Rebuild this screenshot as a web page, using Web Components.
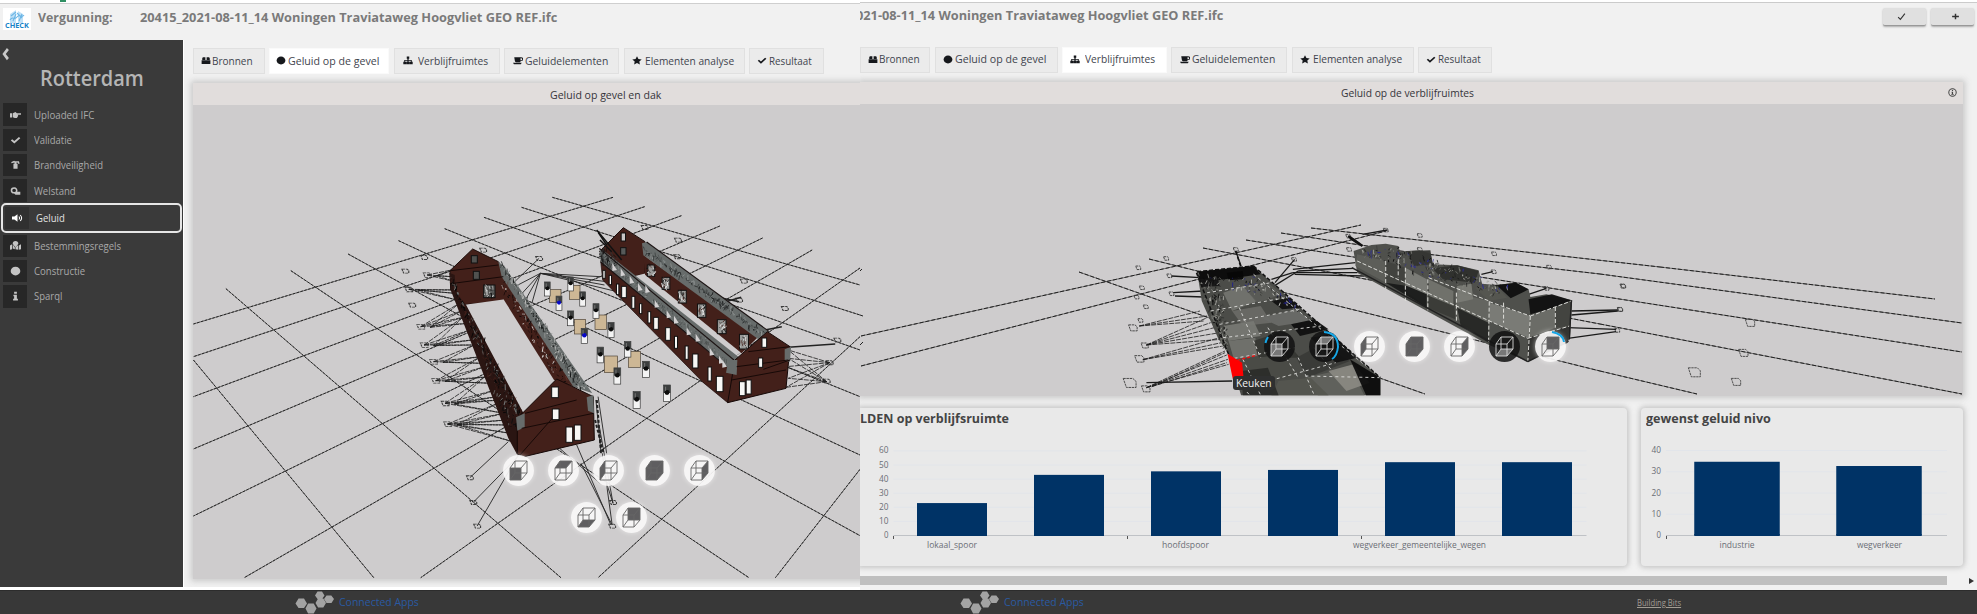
<!DOCTYPE html>
<html lang="nl">
<head>
<meta charset="utf-8">
<title>Vergunning</title>
<style>
html,body{margin:0;padding:0;background:#f1f1f1;overflow:hidden}
body{width:1977px;height:614px;font-family:"Open Sans","Noto Sans",sans-serif}
</style>
</head>
<body>
<permit-page></permit-page>
<script>
const define=(name,html,extra={})=>{
  const C=class extends HTMLElement{
    connectedCallback(){
      if(this.shadowRoot)return;
      this.attachShadow({mode:"open"}).innerHTML=typeof html==="function"?html(this):html;
      if(extra.ready)extra.ready(this);
    }
  };
  customElements.define(name,C);
};
const at=(e,n,d="")=>e.hasAttribute(n)?e.getAttribute(n):d;

/* one line of text scaled to a set width */
define("fit-text",`<style>:host{display:inline-block;white-space:nowrap;flex:none}span{display:inline-block;transform-origin:0 50%;text-decoration:var(--line,none)}</style><span><slot></slot></span>`,{ready(e){
  const w=+at(e,"w",100),s=e.shadowRoot.querySelector("span");
  e.style.width=w+"px";
  s.style.transform=`scaleX(${w/s.offsetWidth})`;
}});

/* icons, 16x16 grid */
const ICONS={
  bin:'<path d="M2 7V4l1-2h4v5zM9 7V2h4l1 2v3zM1 7.500h14V14H1z"/>',
  disc:'<circle cx="8" cy="8" r="7"/>',
  tree:'<path d="M6 1h4v4H9v2h5v3h1.500v4.500h-5V10h2V8.600H9V10h1.300v4.500H5.700V10H7V8.600H3.500V10h2v4.500h-5V10H2V7h5V5H6z"/>',
  cup:'<path d="M2 2h11a3 3 0 0 1 0 7h-1v1a2 2 0 0 1-2 1H5a2 2 0 0 1-2-2zM12 4v3.500h1A1.700 1.700 0 0 0 13 4zM0 12h14l-1.500 2.500H1.500z" fill-rule="evenodd"/>',
  star:'<path d="M8 .5l2.300 4.900 5.200.7-3.800 3.700.9 5.400L8 12.600l-4.600 2.600.9-5.400L.5 6.100l5.200-.7z"/>',
  check:'<path d="M1.200 8.600l2-2L6.300 9.700 13 3l2 2-8.700 8.600z"/>',
  thin:'<path d="M2 9l4 4 8-10" fill="none" stroke="currentColor" stroke-width="2"/>',
  plus:'<path d="M6.700 3h2.600v3.700H14v2.600H9.300V13H6.700V9.300H2V6.700h4.700z"/>',
  hand:'<path d="M0 5h3v7H0zM4 5l4-2 2 2h5a1.200 1.200 0 0 1 0 2.600h-4l1 1-.5 1.500-.7 1.500-1 1.200H7L4 11.500z"/>',
  crane:'<path d="M2 3l4-2 1 1h6l1 4h-2l-1-2H9.500v2H11v8H5V6h1.500V4L2 5z"/>',
  search:'<path d="M6 2a5 5 0 0 1 4.500 7H15v5H8l-2-2a5 5 0 1 1 0-10zm0 2.300a2.700 2.700 0 1 0 0 5.400 2.700 2.700 0 0 0 0-5.400z" fill-rule="evenodd"/>',
  sound:'<path d="M0 5.500h3.500L8 2v12L3.500 10.500H0z"/><path d="M10 5.500q2 2.500 0 5M12 3.200q4 4.800 0 9.600" fill="none" stroke="currentColor" stroke-width="1.500"/>',
  map:'<path d="M0 7l3-2v8l-3 1zM4 5l1 2 2 3v3l-3-1zM12 7v7l-4-1v-3l3-3zM13 7l3-2v8l-3 1z"/><path d="M8 0a4 4 0 0 1 4 4q0 2-4 6-4-4-4-6a4 4 0 0 1 4-4z"/>',
  info:'<path d="M6 1h4v3.200H6zM5 6h5v6.500h1.500V15h-7v-2.500H6V8.200H5z"/>',
  back:'<path d="M10.500 1L14 3.500 8.500 8l5.500 4.500L10.500 15 2.500 8z"/>',
  circled:'<circle cx="8" cy="8" r="6.600" fill="none" stroke="currentColor" stroke-width="1.800"/><path d="M7 3.500h2v2H7zM6.300 6.500h2.700v4h1.300v1.700H5.800v-1.700h1V8h-.5z"/>'
};
define("ui-icon",e=>`<style>:host{display:inline-flex;flex:none;width:${at(e,"w",at(e,"s",10))}px;height:${at(e,"s",10)}px}svg{width:100%;height:100%;fill:currentColor}</style><svg viewBox="0 0 16 16" preserveAspectRatio="none">${ICONS[at(e,"name")]}</svg>`);

define("tab-item",e=>`<style>
:host{display:flex;box-sizing:border-box;width:${at(e,"w")}px;height:26px;flex:none;align-items:center;justify-content:center;gap:${at(e,"gap",2)}px;padding:0 3px 1px 0;background:#ebebeb;border:1px solid #e0e0e0;color:#16181c;font-size:10.500px;overflow:hidden}
:host([active]){background:#fff;border-color:#fafafa}fit-text{color:#3f454e}</style>
<ui-icon name="${at(e,"icon")}" s="9" w="10"></ui-icon><fit-text w="${at(e,"tw")}">${at(e,"label")}</fit-text>`);

define("menu-item",e=>`<style>
:host{display:flex;box-sizing:border-box;align-items:center;height:25.300px;padding-left:3px;color:#a9a9a9;font-size:10.500px}
b{display:flex;align-items:center;justify-content:center;width:24px;height:22.500px;background:#272727;color:#c4c4c4}
fit-text{margin-left:7px}
:host([active]){height:30px;margin:0 1px;border:2px solid #e6e6e6;border-radius:5px;color:#e2e2e2;padding-left:2px}
:host([active]) b{background:#303030;color:#fff}</style>
<b><ui-icon name="${at(e,"icon")}" s="10" w="11"></ui-icon></b><fit-text w="${at(e,"w")}">${at(e,"label")}</fit-text>`);

define("side-menu",`<style>
:host{display:block;box-sizing:border-box;width:184px;height:547px;background:#3a3a3a;flex:none;border-right:1px solid #fff}
.b{height:18px;padding:4px 0 0 1px;color:#c8c8c8;box-sizing:border-box}
.t{height:38px;padding-left:39.500px;display:flex;align-items:center;color:#b5b5b5;font-size:21.500px;font-weight:600}</style>
<div class="b"><ui-icon name="back" s="14" w="9"></ui-icon></div>
<div class="t"><fit-text w="104">Rotterdam</fit-text></div><div style="height:6px"></div>
<menu-item icon="hand" label="Uploaded IFC" w="60"></menu-item>
<menu-item icon="check" label="Validatie" w="38"></menu-item>
<menu-item icon="crane" label="Brandveiligheid" w="69"></menu-item>
<menu-item icon="search" label="Welstand" w="42"></menu-item>
<menu-item icon="sound" label="Geluid" w="29" active></menu-item>
<menu-item icon="map" label="Bestemmingsregels" w="87"></menu-item>
<menu-item icon="disc" label="Constructie" w="51"></menu-item>
<menu-item icon="info" label="Sparql" w="28"></menu-item>`);

define("check-logo",`<style>:host{display:flex;flex-direction:column;align-items:center;width:28px;height:22px;background:#fff;color:#1683c8;font-size:7px;line-height:6px;font-weight:700}svg{width:16px;height:14px;margin-top:1px}</style>
<svg viewBox="0 0 16 14"><path d="M1 14V5l6-4v13zM9 14V2l5 3v9z" fill="#bfe0f6"/><path d="M1 11c3-5 4 1 7-3s4 2 7-2M2 7l5-4M8 4l5 5M4 12l3-7M10 12l3-7" fill="none" stroke="#6cb6e6" stroke-width="1.100"/></svg><fit-text w="24">CHECK</fit-text>`);

define("app-footer",e=>`<style>
:host{display:flex;align-items:center;height:24px;background:#383838;flex:none;box-sizing:border-box;border-top:1px solid #2c2c2c;font-size:11px;color:#2a5aa2}
svg{width:40px;height:24px;margin-left:${at(e,"x")}px;fill:#a3a3a3;flex:none}fit-text{margin-left:4px;margin-top:-2px}
.b{margin-left:553px;color:#a39d94;font-size:8.500px;--line:underline;margin-top:0}</style>
<svg viewBox="0 0 40 24"><path d="M.500 12.500l3-5h5.500l3 5-3 4.500H3.500zM10.500 17.500l2.600-5h5.600l2.800 5-2.800 5h-5.600zM20.500 12l2.600-4.500h5.200l2.700 4.500-2.700 4.500h-5.200zM20 4.500l2.500-4h4.500l2.500 4-2.500 3.500h-4.500zM29 8l2.500-3.600h4.800L39 8l-2.500 4h-5z"/></svg>
<fit-text w="80">Connected Apps</fit-text>${e.hasAttribute("partner")?'<fit-text class="b" w="44">Building Bits</fit-text>':""}`);

/* viewpoint button: a wire cube with one shaded side */
const FACES={front:"M7 13h11v12H7z",top:"M7 13l5-7h12l-6 7z",left:"M7 13l5-7v12l-5 7z",solid:"M7 13l5-7h12v12l-6 7H7z",right:"M18 13l6-7v12l-6 7z",bottom:"M7 25l5-7h12l-6 7z",rear:"M12 6h12v12H12z"};
define("view-cube",e=>{const k=e.hasAttribute("dark"),c=k?"#d8d8d8":"#666";return `<style>:host{display:block;width:31px;height:31px;border-radius:50%;background:${k?"rgba(18,18,18,.86)":"rgba(249,248,248,.93)"};box-shadow:0 0 5px ${k?"transparent":"rgba(255,255,255,.55)"}}svg{display:block}</style>
<svg width="31" height="31" viewBox="0 0 31 31">${e.hasAttribute("arc")?`<path d="${at(e,"arc")}" fill="none" stroke="#16a7e8" stroke-width="2"/>`:""}<path d="${FACES[at(e,"face")]}" fill="${k?"#777":"#5f5e60"}"/><path d="M7 13h11v12H7zM12 6h12v12H12zM7 13l5-7M18 13l6-7M7 25l5-7M18 25l6-7" fill="none" stroke="${c}" stroke-width=".9"/></svg>`});

/* scene helpers */
let seed=7;const rnd=()=>((seed=(seed*16807)%2147483647)/2147483647);
const P=(pts,f,x="")=>`<polygon points="${pts}" fill="${f}" ${x}/>`;
const L=(a,s="#222",w=1,x="")=>a.map(l=>`<path d="M${l[0]} ${l[1]}L${l[2]} ${l[3]}" stroke="${s}" stroke-width="${w}" fill="none" vector-effect="non-scaling-stroke" ${x}/>`).join("");
const mix=(a,b,t)=>[a[0]+(b[0]-a[0])*t,a[1]+(b[1]-a[1])*t];
/* short strokes scattered over the quad a-b (one edge) and c-d (opposite edge) */
const speck=(a,b,c,d,n,cols,len=14)=>{let o="";for(let i=0;i<n;i++){const t=rnd(),p=mix(mix(a,b,t),mix(c,d,t),rnd()),q=rnd()*6.28,l=len*(.3+rnd());o+=`<path d="M${p[0].toFixed(1)} ${p[1].toFixed(1)}l${(Math.cos(q)*l*.5).toFixed(1)} ${(Math.sin(q)*l).toFixed(1)}" stroke="${cols[i%cols.length]}" stroke-width="${(1.200+rnd()*2).toFixed(1)}"/>`}return o};
const fan=(x,y,ts)=>L(ts.map(t=>[x,y,t[0],t[1]]),"#1c1c1c",.8,'stroke-dasharray="5 1"');
const node=(x,y,r=8)=>`<path d="M${x-r} ${y-r*.7}h${r*1.500}l${r*.5} ${r*.5}v${r}h${-r*1.500}z" fill="none" stroke="#3c3c3c" stroke-width="2.600" stroke-dasharray="7 2"/>`;
const crack=(x,y,w,h,f="#f7f7f5")=>`<rect x="${x-w/2}" y="${y-h/2}" width="${w}" height="${h}" fill="${f}" stroke="#111" stroke-width="3"/>`;

function sceneFacade(){
  const g1=[[848,292,1568,555],[776,322,1568,645],[688,352,1568,750],[596,386,1568,890],[488,422,1568,1065],[370,462,1568,1307],[236,512,1308,1433],[84,566,868,1433],[8,780,430,1433],[990,292,8,672],[1064,320,8,770],[1150,347,8,890],[1240,378,8,1047],[1340,414,8,1248],[1456,450,127,1433],[1568,504,540,1433],[1568,710,955,1433],[1568,1108,1370,1433]];
  let o=`<g transform="translate(190,100) scale(.42730,.33333)">${L(g1,"#2b2b2b",.6)}${L(g1,"#222",.95,'stroke-dasharray="2.500 1.500"')}`;
  [[555,525,[[612,510],[612,530],[620,545]]],[512,568,[[620,580],[625,600],[630,570]]],[540,680,[[630,610],[640,630],[645,650],[650,670]]],[548,735,[[640,650],[655,690],[665,735],[660,720]]],[570,785,[[665,735],[680,770],[685,790]]],[575,842,[[680,770],[690,800],[700,830],[705,850]]],[597,910,[[690,830],[715,870],[725,900],[735,940],[720,890]]],[603,972,[[720,910],[735,940],[750,1000],[755,1025],[745,975],[740,960]]]]
    .forEach(f=>{o+=fan(f[0],f[1],f[2]);o+=fan(f[0]+22,f[1]+2,f[2]);o+=node(f[0],f[1],9)});
  o+=L([[655,1133,745,1025],[663,1207,790,1040],[672,1278,775,1050],[820,520,770,590],[820,520,785,600],[820,520,760,560],[820,520,800,610],[817,475,760,545],[820,520,960,530],[820,520,975,545],[820,520,1000,575],[820,520,970,555],[955,890,975,1060],[950,900,962,1060],[958,980,990,1210],[905,1035,985,1275],[865,1045,960,1150],[975,1150,990,1210],[915,1090,988,1275],[965,1060,988,1275]],"#222",.9);
  o+=L([[952,900,962,1060],[948,960,968,1060]],"#222",2,'stroke-dasharray="3 2"');
  [[655,1133],[663,1207],[672,1278],[990,1207],[988,1278],[817,475],[548,472],[504,513],[520,615],[686,450],[1064,382],[1142,420],[1140,470],[1296,543],[1392,625],[1515,720],[1497,788],[1490,843],[1285,600]].forEach(n=>o+=node(n[0],n[1],8));
  [[1497,788],[1490,845]].forEach(n=>o+=fan(n[0],n[1],[[1400,750],[1400,775],[1395,800],[1400,835],[1395,862]]));
  o+=L([[1400,742,1510,732],[1345,690,1385,680],[1230,590,1285,605],[1235,612,1290,592]],"#222",1.500);
  o+="</g><g transform=\"translate(430,180) scale(.33333)\">";
  const B="#43201a",D="#2a1512",G="#676c6b",F="#cecccd";
  // left block
  o+=P("60,272 128,207 205,245 240,300 225,362 105,374 62,330",B,'stroke="#190b09" stroke-width="3"');
  o+=P("105,374 225,358 378,597 262,715",F);
  o+=P("205,255 222,360 372,600 445,625 300,400",B)+P("205,245 225,262 487,640 430,620 215,290",G);
  o+=P("58,278 74,285 78,340 108,374 285,708 262,825 235,775 64,335",D);
  o+=speck([62,290],[245,760],[78,330],[280,710],300,["#050505","#43201a","#737776","#101010"]);
  o+=speck([210,250],[440,622],[225,262],[480,640],250,["#191b1b","#8d9190","#2f3231","#c8c8c6"]);
  o+=speck([215,320],[375,590],[220,300],[425,620],110,["#1a0a08","#090909","#d4d2d0","#5b3028"]);
  o+=P("262,715 380,597 490,650 493,780 282,830 262,822",B,'stroke="#140807" stroke-width="3"');
  o+=P("258,712 284,700 284,742 262,752",G)+P("470,652 490,645 492,700 474,692",G);
  o+=L([[270,825,380,700],[285,700,440,660],[275,745,490,700],[62,272,205,255],[70,310,220,290]],"#170907",1);
  o+=crack(375,637,20,32)+crack(377,703,20,32)+crack(418,764,20,46)+crack(443,758,20,46);
  o+=crack(133,238,18,22,"#50514f")+crack(139,286,18,24,"#50514f")+crack(178,334,34,38,"#5d5e5c")+speck([162,318],[194,318],[162,350],[194,350],26,["#111","#ddd"],12);
  // right block
  o+=P("508,215 580,143 645,185 645,282 615,288 540,235",B,'stroke="#190b09" stroke-width="3"');
  o+=P("615,288 648,280 935,515 908,535",F);
  o+=P("640,225 985,470 935,520 645,284",B)+P("636,190 650,186 1018,455 985,478 640,226",G);
  o+=P("512,242 918,580 893,668 820,608 518,300",B,'stroke="#190b09" stroke-width="2"')+P("508,205 525,215 925,530 920,585 512,246",G);
  o+=speck([640,200],[985,460],[645,215],[1010,462],220,["#202323","#8f9493","#2a2c2c","#3c4040"],13);
  o+=speck([512,220],[915,545],[512,240],[915,575],150,["#3a3d3d","#868a89","#4c5150"],11);
  o+=speck([505,205],[560,230],[512,245],[560,260],40,["#111","#333"],18);
  o+=L([[508,205,912,540],[512,246,918,583],[650,186,1018,455]],"#1c1414",1.100);
  [[553,262],[578,278],[605,300],[630,322],[652,328],[680,372],[716,404],[738,420],[776,455],[803,474],[845,516],[873,540],[883,552]].forEach(p=>o+=P(`${p[0]-6},${p[1]-13} ${p[0]+8},${p[1]+8} ${p[0]-6},${p[1]+11}`,"#d3d1d2"));
  [[522,283,7,24],[541,300,7,28],[563,328,7,32],[582,336,14,34],[610,367,9,36],[632,386,7,30],[658,412,8,34],[678,430,14,36],[714,462,14,38],[738,487,9,36],[770,518,9,40],[796,543,16,42],[839,582,10,42],[869,612,20,46]].forEach(a=>o+=crack(...a));
  [[663,272],[708,310],[757,350],[815,392],[875,440],[942,485]].forEach((p,i)=>{o+=crack(p[0],p[1],22+i,34+i*2,"#999a98")+speck([p[0]-10,p[1]-16],[p[0]+10,p[1]-16],[p[0]-10,p[1]+16],[p[0]+10,p[1]+16],20,["#111","#eee","#43201a"],13)});
  o+=P("915,540 1012,455 1080,500 1068,625 893,668",B,'stroke="#140807" stroke-width="3"');
  o+=P("895,540 922,540 920,585 888,578",G)+P("1064,508 1083,500 1080,545 1064,542",G);
  o+=L([[905,600,1068,570],[920,560,1075,540],[955,515,1080,500],[1000,568,1080,540]],"#170907",1);
  o+=crack(1003,488,14,28)+crack(992,548,12,28)+crack(937,626,17,42)+crack(956,621,15,42);
  o+=crack(580,171,13,24,"#c9c7c7")+crack(580,214,16,22,"#565a59");
  o+=L([[505,158,530,195],[500,150,575,240],[510,180,545,215]],"#111",1.500);
  // terrace screens and doors
  [[376,348,34,38],[434,337,32,42],[450,440,34,44],[512,427,34,44],[543,553,40,50],[613,538,36,48]].forEach(a=>o+=`<rect x="${a[0]-a[2]/2}" y="${a[1]-a[3]/2}" width="${a[2]}" height="${a[3]}" fill="#cdb795" stroke="#4b4135" stroke-width="2"/>`);
  [[352,327],[422,312],[458,357],[387,370,1],[498,393],[422,415],[543,450],[463,468,1],[593,508],[511,525],[648,568],[562,588],[711,640],[620,660]].forEach(a=>{const w=13+a[1]/80,h=34+a[1]/40;o+=`<rect x="${a[0]-w/2}" y="${a[1]-h/2}" width="${w}" height="${h}" fill="#f4f4f4" stroke="#333" stroke-width="2"/><rect x="${a[0]-w/2}" y="${a[1]-h/2}" width="${w}" height="${h*.48}" fill="#3c3e3e"/><circle cx="${a[0]}" cy="${a[1]-h*.05}" r="${w*.35}" fill="${a[2]?"#0808c8":"#0c0c0c"}"/><path d="M${a[0]-w*.2} ${a[1]-h*.4}v${h*.25}" stroke="#777" stroke-width="3"/>`});
  return o+"</g>";
}

function sceneRooms(){
  const g=[[1311,227,1660,266],[1660,266,1935,298],[1281,232,1400,250],[1400,250,1600,273],[1600,273,1962,322],[1246,239,1600,295],[1600,295,1962,351],[1203,247,1600,323],[1600,323,1962,393],[1149,258,1600,370],[1600,370,1697,393],[1079,271,1425,393],[861,335,1361,224],[861,365,1386,230]];
  let o=L(g,"#2b2b2b",.6)+L(g,"#222",1,'stroke-dasharray="4 2"')+L([[860,270,862,268],[860,344,863,341],[860,314,863,315]],"#222",1);
  o+='<g transform="translate(1600,200) scale(.33333)">'+[[450,365,14],[430,455,14],[283,513,18],[408,542,14],[68,255,8],[60,325,8]].map(a=>node(...a)).join("")+"</g>";
  o+='<g transform="translate(1100,210) scale(.35714,.33333)">';
  [[185,142],[107,170],[117,230],[102,258],[128,287],[113,328],[194,194],[200,248],[380,115],[695,75],[800,57],[895,73],[895,115],[1103,128],[1257,168],[1102,182],[1250,232],[1465,225],[1456,295],[1448,358],[697,115],[543,145]].forEach(n=>o+=node(n[0],n[1],7));
  [[92,350,12],[125,403,10],[110,443,13],[83,515,18],[128,533,12]].forEach(n=>o+=node(...n));
  o+=L([[200,195,280,200],[205,245,290,240],[210,255,290,258],[480,230,555,180],[490,215,545,145],[480,205,540,185],[555,180,710,172],[540,185,720,185],[545,190,740,195],[540,175,715,155],[380,120,395,165],[1320,300,1450,297],[1320,312,1450,300],[1310,350,1445,355],[1310,382,1445,362],[1068,190,1100,182],[1200,250,1250,232],[130,515,370,510],[805,57,735,70]],"#1a1a1a",1.300);
  o+=L([[695,75,735,105],[700,80,725,98]],"#111",2.500);
  o+=fan(110,345,[[280,300],[300,315],[290,330]])+fan(130,402,[[300,320],[310,335],[320,350],[335,365],[340,385]])+fan(120,446,[[335,380],[340,395],[345,405]])+fan(130,530,[[350,420],[355,432],[358,445],[360,460]])+fan(145,527,[[350,425],[355,455]]);
  // left block of rooms
  o+=P("272,182 430,165 470,205 785,500 785,553 395,553 360,430 330,380 285,270","#4b4c48");
  const ro=[["272,182 430,165 450,190 280,215","#090909"],["280,205 330,200 335,225 285,228","#151515"],["355,185 400,180 402,205 360,208","#080808"],["345,245 400,225 440,270 370,300","#73746f"],["400,225 470,215 510,250 440,275","#5a5b57"],["370,300 450,285 480,335 400,345","#6a6b66"],["480,270 530,260 560,290 510,295","#101010"],["345,345 430,330 450,375 360,390","#777873"],["450,320 550,295 590,330 500,345","#6b6c68"],["360,390 435,380 440,435 375,445","#72736e"],["535,340 600,325 640,355 560,375","#0e0e0e"],["430,390 500,365 560,440 445,440","#353632"],["400,445 520,430 555,495 430,520","#4a4b46"],["550,440 620,400 700,450 580,500","#393a37"],["575,500 700,470 740,553 610,553","#62635e"],["640,480 710,460 755,515 690,540","#8a8982"],["500,510 590,500 640,553 480,553","#555650"],["700,445 785,500 785,553 745,553","#0b0b0b"],["590,380 650,370 720,440 660,455","#111"],["395,480 470,470 500,553 400,553","#2b2c29"]];
  ro.forEach(r=>o+=P(r[0],r[1],'opacity=".93"'));
  o+=speck([275,190],[345,420],[340,200],[360,400],140,["#0a0a0a","#b8b8b2","#2a2b29","#80817c"],14);
  o+=speck([290,200],[560,300],[440,200],[540,270],110,["#151515","#babab4","#3c3d3a","#22228c"],11);
  o+=L([[300,245,480,215],[310,300,520,260],[335,340,560,295],[345,380,620,345],[360,445,545,410],[430,522,660,455],[575,495,785,500],[400,445,450,553],[470,350,555,500],[555,440,600,553],[390,290,450,440],[600,410,650,480],[430,190,785,500],[400,530,420,553]],"#ddddda",.9,'stroke-dasharray="3 3"');
  o+=L([[270,185,360,430],[272,182,430,165],[430,165,785,500],[380,120,395,170]],"#111",1.500,'stroke-dasharray="4 2"');
  o+=P("357,428 398,455 402,500 372,505","#f00")+L([[385,448,440,432]],"#e11",1.500,'stroke-dasharray="3 2"');
  // right block of rooms
  o+=P("710,120 760,102 800,98 835,105 840,122 895,118 925,128 932,160 1000,163 1060,178 1070,218 1110,222 1165,215 1200,235 1205,258 1250,250 1322,268 1316,385 1198,452 1085,400 720,185","#4f504c");
  [["720,130 800,150 800,215 715,165","#5e5f5a"],["800,150 855,170 855,240 800,215","#41423e"],["855,170 915,205 918,290 855,240","#7c7d78"],["920,205 990,240 995,325 918,290","#3a3b37"],["920,205 990,240 990,285 922,255","#73746e"],["995,245 1090,270 1088,390 1000,325","#656661"],["1090,275 1205,315 1200,380 1090,330","#7c7d78"],["1205,315 1275,290 1275,350 1200,380","#6d6e68"],["1275,290 1320,270 1315,345 1275,350","#42433f"],["1200,265 1265,250 1320,268 1270,290 1205,310","#101010"],["1110,222 1165,215 1200,235 1150,262","#0f0f0f"],["1050,230 1110,225 1140,260 1090,270","#555650"],["930,172 1000,163 1060,180 1050,215 960,205","#2e2f2c"],["860,120 925,118 932,160 880,165","#343532"],["800,215 915,290 915,250 860,225","#191a19"],["1000,290 1088,335 1088,395 1010,345","#252624"],["1198,380 1315,345 1310,395 1198,452","#31322f"],["1000,225 1040,218 1045,265 1000,275","#7a7b75"]].forEach(r=>o+=P(r[0],r[1],'opacity=".95"'));
  o+=speck([715,125],[1100,255],[830,110],[1150,230],210,["#111","#a9aaa4","#30312e","#191919","#80817b","#2a2a94"],12);
  o+=L([[720,150,1198,382],[800,150,800,235],[855,170,855,270],[918,205,918,298],[998,245,998,330],[1090,272,1088,395],[1205,315,1198,450],[1275,288,1275,350],[1130,275,1130,335],[835,145,835,200],[920,200,1090,270],[1090,272,1205,315],[1205,315,1320,270],[1198,382,1315,345]],"#dcdcd8",1,'stroke-dasharray="4 2"');
  o+=L([[705,170,1198,452],[1198,452,1312,390],[1320,268,1314,385]],"#222",1.500);
  return o+"</g>";
}

define("model-view",e=>{const l=at(e,"scene")==="facade";const vb=l?"193 105 667 475":"860 103 1103 292";return `<style>
:host{display:block;position:relative;flex:1;background:#cecccd;overflow:hidden}
svg.s{display:block}.r{position:absolute;display:flex;gap:14.200px}
.tip{position:absolute;left:372.500px;top:272px;width:42px;height:14.500px;background:#2f3030;border-radius:3px;color:#f4f4f4;font-size:10.500px;line-height:14px;text-align:center;box-sizing:border-box;padding-left:1px}</style>
<svg class="s" width="${l?667:1103}" height="${l?475:292}" viewBox="${vb}">${l?sceneFacade():sceneRooms()}</svg>
${l?`<div class="r" style="left:310px;top:350px"><view-cube face="front"></view-cube><view-cube face="top"></view-cube><view-cube face="left"></view-cube><view-cube face="solid"></view-cube><view-cube face="right"></view-cube></div>
<div class="r" style="left:377.500px;top:397px"><view-cube face="bottom"></view-cube><view-cube face="rear"></view-cube></div>`:
`<div class="tip"><fit-text w="36">Keuken</fit-text></div>
<div class="r" style="left:403.500px;top:227px"><view-cube face="front" dark arc="M4 6q-2 3-2.500 6"></view-cube><view-cube face="top" dark arc="M15 1Q29 2 29 16Q28 25 23 28"></view-cube><view-cube face="left"></view-cube><view-cube face="solid"></view-cube><view-cube face="right"></view-cube><view-cube face="bottom" dark></view-cube><view-cube face="rear" arc="M17 1q11 2 12 10"></view-cube></div>`}`});

define("viewer-panel",e=>`<style>
:host{display:flex;flex-direction:column;box-shadow:0 0 6px 2px rgba(120,120,120,.34);background:#cecccd;box-sizing:border-box}
.h{display:flex;align-items:center;height:22px;background:#e1dddc;color:#35343a;font-size:11.500px;flex:none;padding-left:${at(e,"tx")}px}
.h ui-icon{margin-left:474px;color:#444}</style>
<div class="h"><fit-text w="${at(e,"tw")}">${at(e,"label")}</fit-text>${e.hasAttribute("info")?'<ui-icon name="circled" s="9"></ui-icon>':""}</div><model-view scene="${at(e,"scene")}"></model-view>`);

/* bar chart with a plain category axis */
define("bar-chart",e=>{
  const d=JSON.parse(at(e,"data")),n=d.bars.length,step=d.w/n,py=v=>127.500-v*d.unit;
  let s="";
  for(let v=0;v<=d.max;v+=10){s+=`<text x="${d.x-5}" y="${py(v)+2.500}" text-anchor="end" textLength="${v?9.500:4.500}" lengthAdjust="spacingAndGlyphs">${v}</text>`;if(v)s+=`<path d="M${d.x} ${py(v)}h${d.aw}" stroke="#e2e5ea"/>`}
  d.bars.forEach((b,i)=>{s+=`<rect x="${d.x+step*(i+.5)-d.bw/2}" y="${py(b)}" width="${d.bw}" height="${b*d.unit}" fill="#003366"/>`});
  s+=`<path d="M${d.x} 127.500h${d.aw}" stroke="#bfc2c6"/>`;
  d.ticks.forEach(t=>s+=`<path d="M${t+.5} 128v3" stroke="#555"/>`);
  d.bars.forEach((b,i)=>{s+=`<rect x="${d.x+step*(i+.5)-d.bw/2}" y="126" width="${d.bw}" height="2" fill="#003366"/>`});
  d.labels.forEach(l=>s+=`<text x="${l[1]}" y="140" textLength="${l[2]}" lengthAdjust="spacingAndGlyphs">${l[0]}</text>`);
  return `<style>:host{display:block;width:${d.pw}px;height:158px;flex:none;background:#e9e9e9;box-shadow:0 0 5px 2px rgba(120,120,120,.34);border-radius:${d.round};box-sizing:border-box;position:relative}
  .t{height:20px;padding:2px 0 0 ${d.tx}px;box-sizing:border-box;line-height:17px;font-size:13px;font-weight:700;color:#444}
  svg{display:block;margin-top:-20px}text{font:8.500px "Open Sans",sans-serif;fill:#6b6e76}</style>
  <div class="t"><fit-text w="${d.tw}">${d.title}</fit-text></div><svg width="${d.pw}" height="158">${s}</svg>`});

define("tab-bar",`<style>:host{display:flex;gap:4.500px;flex:none}</style><slot></slot>`);
const tabs=(ws,act)=>[["bin","Bronnen",41,1],["disc","Geluid op de gevel",91,2],["tree","Verblijfruimtes",70,5],["cup","Geluidelementen",83,2],["star","Elementen analyse",89,3],["check","Resultaat",43,2]].map((t,i)=>`<tab-item icon="${t[0]}" label="${t[1]}" tw="${t[2]}" gap="${t[3]}" w="${ws[i]}" ${i===act?"active":""}></tab-item>`).join("");

define("facade-window",`<style>
:host{display:flex;flex-direction:column;width:860px;height:614px;background:#f1f1f1;flex:none;overflow:hidden}
.top{height:3px;background:#fff;border-bottom:1px solid #cfcfcf;padding-left:60px;flex:none;box-sizing:content-box}.top i{display:block;width:6px;height:2px;background:#2f8f63}
header{display:flex;align-items:flex-start;height:36px;padding:4px 0 0 3px;box-sizing:border-box;color:#7a7a7a;font-size:13px;font-weight:700;line-height:18px;flex:none}
main{display:flex;height:547px;flex:none}section{display:flex;flex-direction:column}
tab-bar{margin:8px 0 0 9px}viewer-panel{width:700px;height:496px;margin:9px 0 0 9px}
.g{flex:1;background:#fff}</style>
<div class="top"><i></i></div>
<header><check-logo></check-logo><fit-text w="75" style="margin-left:7px">Vergunning:</fit-text><fit-text w="417" style="margin-left:27px">20415_2021-08-11_14 Woningen Traviataweg Hoogvliet GEO REF.ifc</fit-text></header>
<main><side-menu></side-menu><section><tab-bar>${tabs([71.500,120,106,115,121,74.500],1)}</tab-bar><viewer-panel scene="facade" label="Geluid op gevel en dak" tx="357" tw="111"></viewer-panel></section></main>
<div class="g"></div><app-footer x="295"></app-footer>`);

define("rooms-window",`<style>
:host{display:flex;flex-direction:column;width:1117px;height:614px;background:#f1f1f1;flex:none;overflow:hidden}
.top{height:2px;background:#fff;border-bottom:1px solid #cbcbcb;flex:none}
header{display:flex;align-items:flex-start;height:43.500px;box-sizing:border-box;flex:none;color:#7a7a7a;font-size:13px;font-weight:700;line-height:18px;padding-top:3px}
header fit-text{margin-left:-4px}header div{margin-left:auto;display:flex;gap:5px;padding:2px 3px 0 0}
button{display:flex;align-items:center;justify-content:center;padding:0;width:43px;height:18px;border:0;background:#e0e0e0;border-bottom:1px solid #999;border-radius:2px;box-shadow:0 1px 2px #aaa;color:#333}
button:last-child{padding-left:6px}button:first-child{padding-right:6px}
viewer-panel{width:1103px;height:314px;margin-top:9px;flex:none}
.c{display:flex;gap:13.500px;margin-top:12px}
.sb{height:10px;margin-top:10px;display:flex;align-items:center;flex:none}.sb i{width:1087px;height:9px;background:#bfbfbf}.sb b{margin-left:22px;border:4px solid transparent;border-left:5px solid #333;border-right:0;border-top-width:3px;border-bottom-width:3px}
.g{flex:1}</style>
<div class="top"></div>
<header><fit-text w="367">021-08-11_14 Woningen Traviataweg Hoogvliet GEO REF.ifc</fit-text><div><button aria-label="Akkoord"><ui-icon name="thin" s="9"></ui-icon></button><button aria-label="Toevoegen"><ui-icon name="plus" s="9"></ui-icon></button></div></header>
<tab-bar>${tabs([70,123,104.500,116,122,74],2)}</tab-bar>
<viewer-panel scene="rooms" label="Geluid op de verblijfruimtes" tx="481" tw="133" info></viewer-panel>
<div class="c">
<bar-chart data='{"title":"LDEN op verblijfsruimte","tx":0,"tw":149,"pw":767,"round":"0 4px 4px 0","x":33.500,"w":702,"aw":693,"bw":70,"unit":1.410,"max":60,"bars":[23,43,45.500,46.500,52,52],"ticks":[33,267,501],"labels":[["lokaal_spoor",67,50],["hoofdspoor",302,47],["wegverkeer_gemeentelijke_wegen",493,133]]}'></bar-chart>
<bar-chart data='{"title":"gewenst geluid nivo","tx":5,"tw":125,"pw":322,"round":"4px","x":25,"w":284,"aw":281,"bw":85.500,"unit":2.125,"max":40,"bars":[34.700,32.700],"ticks":[25],"labels":[["industrie",78.500,35],["wegverkeer",216,45]]}'></bar-chart>
</div>
<div class="sb"><i></i><b></b></div><div class="g"></div><app-footer x="100" partner></app-footer>`);

define("permit-page",`<style>:host{display:flex;width:1977px;height:614px}</style><facade-window></facade-window><rooms-window></rooms-window>`);
</script>
</body>
</html>
